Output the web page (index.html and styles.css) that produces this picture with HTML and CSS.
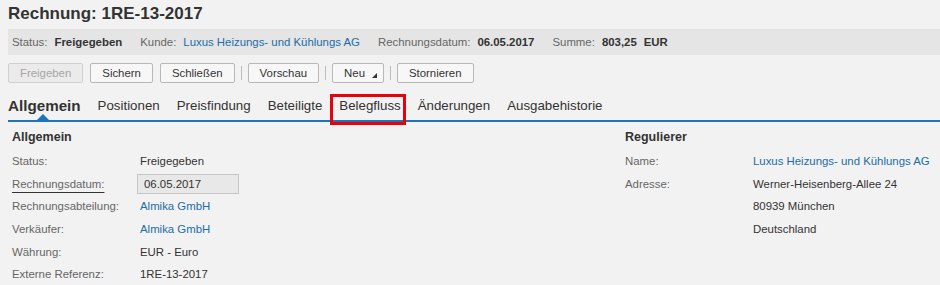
FILE: index.html
```html
<!DOCTYPE html>
<html lang="de">
<head>
    <meta charset="UTF-8">
    <meta name="viewport" content="width=device-width, initial-scale=1.0">
    <title>Rechnung: 1RE-13-2017</title>
    <link rel="stylesheet" href="styles.css">
</head>
<body>
    <h1 class="title">Rechnung: 1RE-13-2017</h1>

    <!-- Kopfdaten -->
    <div class="header-bar">
        <span class="hb-label">Status:</span><span class="hb-value">Freigegeben</span>
        <span class="hb-label">Kunde:</span><a class="link hb-link" href="#">Luxus Heizungs- und Kühlungs AG</a>
        <span class="hb-label">Rechnungsdatum:</span><span class="hb-value">06.05.2017</span>
        <span class="hb-label">Summe:</span><span class="hb-value hb-amount">803,25</span><span class="hb-value">EUR</span>
    </div>

    <!-- Aktionen -->
    <div class="toolbar">
        <button class="btn" disabled>Freigeben</button>
        <button class="btn">Sichern</button>
        <button class="btn">Schließen</button>
        <span class="sep"></span>
        <button class="btn">Vorschau</button>
        <span class="sep"></span>
        <button class="btn btn-menu">Neu</button>
        <span class="sep"></span>
        <button class="btn">Stornieren</button>
    </div>

    <!-- Reiter -->
    <div class="tabs">
        <span class="tab tab-active">Allgemein</span>
        <span class="tab">Positionen</span>
        <span class="tab">Preisfindung</span>
        <span class="tab">Beteiligte</span>
        <span class="tab tab-marked">Belegfluss</span>
        <span class="tab">Änderungen</span>
        <span class="tab">Ausgabehistorie</span>
    </div>

    <div class="content">
        <div class="section section-left">
            <h2 class="section-title">Allgemein</h2>
            <div class="row"><span class="label">Status:</span><span class="value">Freigegeben</span></div>
            <div class="row"><span class="label label-required">Rechnungsdatum:</span><span class="value input">06.05.2017</span></div>
            <div class="row"><span class="label">Rechnungsabteilung:</span><a class="value link" href="#">Almika GmbH</a></div>
            <div class="row"><span class="label">Verkäufer:</span><a class="value link" href="#">Almika GmbH</a></div>
            <div class="row"><span class="label">Währung:</span><span class="value">EUR - Euro</span></div>
            <div class="row"><span class="label">Externe Referenz:</span><span class="value">1RE-13-2017</span></div>
        </div>
        <div class="section section-right">
            <h2 class="section-title">Regulierer</h2>
            <div class="row"><span class="label">Name:</span><a class="value link" href="#">Luxus Heizungs- und Kühlungs AG</a></div>
            <div class="row"><span class="label">Adresse:</span><span class="value">Werner-Heisenberg-Allee 24</span></div>
            <div class="row"><span class="label"></span><span class="value">80939 München</span></div>
            <div class="row"><span class="label"></span><span class="value">Deutschland</span></div>
        </div>
    </div>
</body>
</html>
```

FILE: styles.css
```css
body {
    font-family: "Liberation Sans", Arial, sans-serif;
    background-color: #f2f2f2;
    color: #333;
    margin: 0;
    padding: 0 0 0 8px;
    font-size: 11.4px;
}
.title {
    font-size: 17px;
    font-weight: bold;
    color: #333;
    margin: 0;
    padding-top: 4px;
    height: 25px;
}
.link {
    color: #1b6ea8;
    text-decoration: none;
}
.header-bar {
    background-color: #e5e5e5;
    height: 26px;
    display: flex;
    align-items: center;
    padding-left: 4px;
}
.hb-label {
    color: #666;
    margin-right: 7px;
}
.hb-value {
    font-weight: bold;
    color: #333;
    margin-right: 18px;
}
.hb-link {
    margin-right: 18px;
}
.hb-amount {
    margin-right: 7px;
}
.toolbar {
    display: flex;
    align-items: center;
    margin-top: 8px;
    height: 20px;
}
.btn {
    font-family: inherit;
    font-size: 11.4px;
    color: #333;
    background-color: #f7f7f7;
    border: 1px solid #b8b8b8;
    border-radius: 2px;
    height: 20px;
    padding: 0 11px;
    margin-right: 7px;
    position: relative;
}
.btn:disabled {
    color: #a6a6a6;
    background-color: #ebebeb;
    border-color: #cfcfcf;
}
.btn-menu {
    padding-right: 18px;
}
.btn-menu::after {
    content: "";
    position: absolute;
    right: 6px;
    bottom: 4px;
    border-left: 5px solid transparent;
    border-bottom: 5px solid #333;
}
.sep {
    width: 1px;
    height: 14px;
    background-color: #bdbdbd;
    margin: 0 6px 0 -1px;
}
.tabs {
    display: flex;
    align-items: flex-end;
    margin-top: 10px;
    height: 27px;
    border-bottom: 2px solid #1c75bc;
    position: relative;
}
.tab {
    font-size: 13.3px;
    color: #333;
    margin-right: 17px;
    padding-bottom: 7px;
    position: relative;
}
.tab-active {
    font-size: 15.2px;
    font-weight: bold;
    padding-bottom: 6px;
}
.tab-active::after {
    content: "";
    position: absolute;
    left: 29px;
    bottom: 0;
    border-left: 6px solid transparent;
    border-right: 6px solid transparent;
    border-bottom: 6px solid #1c75bc;
}
.tab-marked::before {
    content: "";
    position: absolute;
    left: -9px;
    right: -5px;
    top: -4px;
    bottom: -5px;
    border: 3px solid #e8000d;
}
.content {
    display: flex;
    padding: 8px 0 0 4px;
}
.section-left {
    width: 613px;
}
.section-right {
    flex: 1;
}
.section-title {
    font-size: 12.5px;
    font-weight: bold;
    color: #333;
    margin: 0 0 6px;
}
.row {
    display: flex;
    align-items: center;
    height: 22.6px;
}
.label {
    color: #666;
    width: 128px;
}
.label-required {
    text-decoration: underline;
    text-decoration-color: #333;
    text-underline-offset: 4px;
}
.value {
    color: #333;
}
.value.link {
    color: #1b6ea8;
}
.input {
    background-color: #e8e8e8;
    border: 1px solid #c6c6c6;
    width: 94px;
    height: 18px;
    line-height: 18px;
    padding-left: 6px;
    margin-left: -3px;
}
```
